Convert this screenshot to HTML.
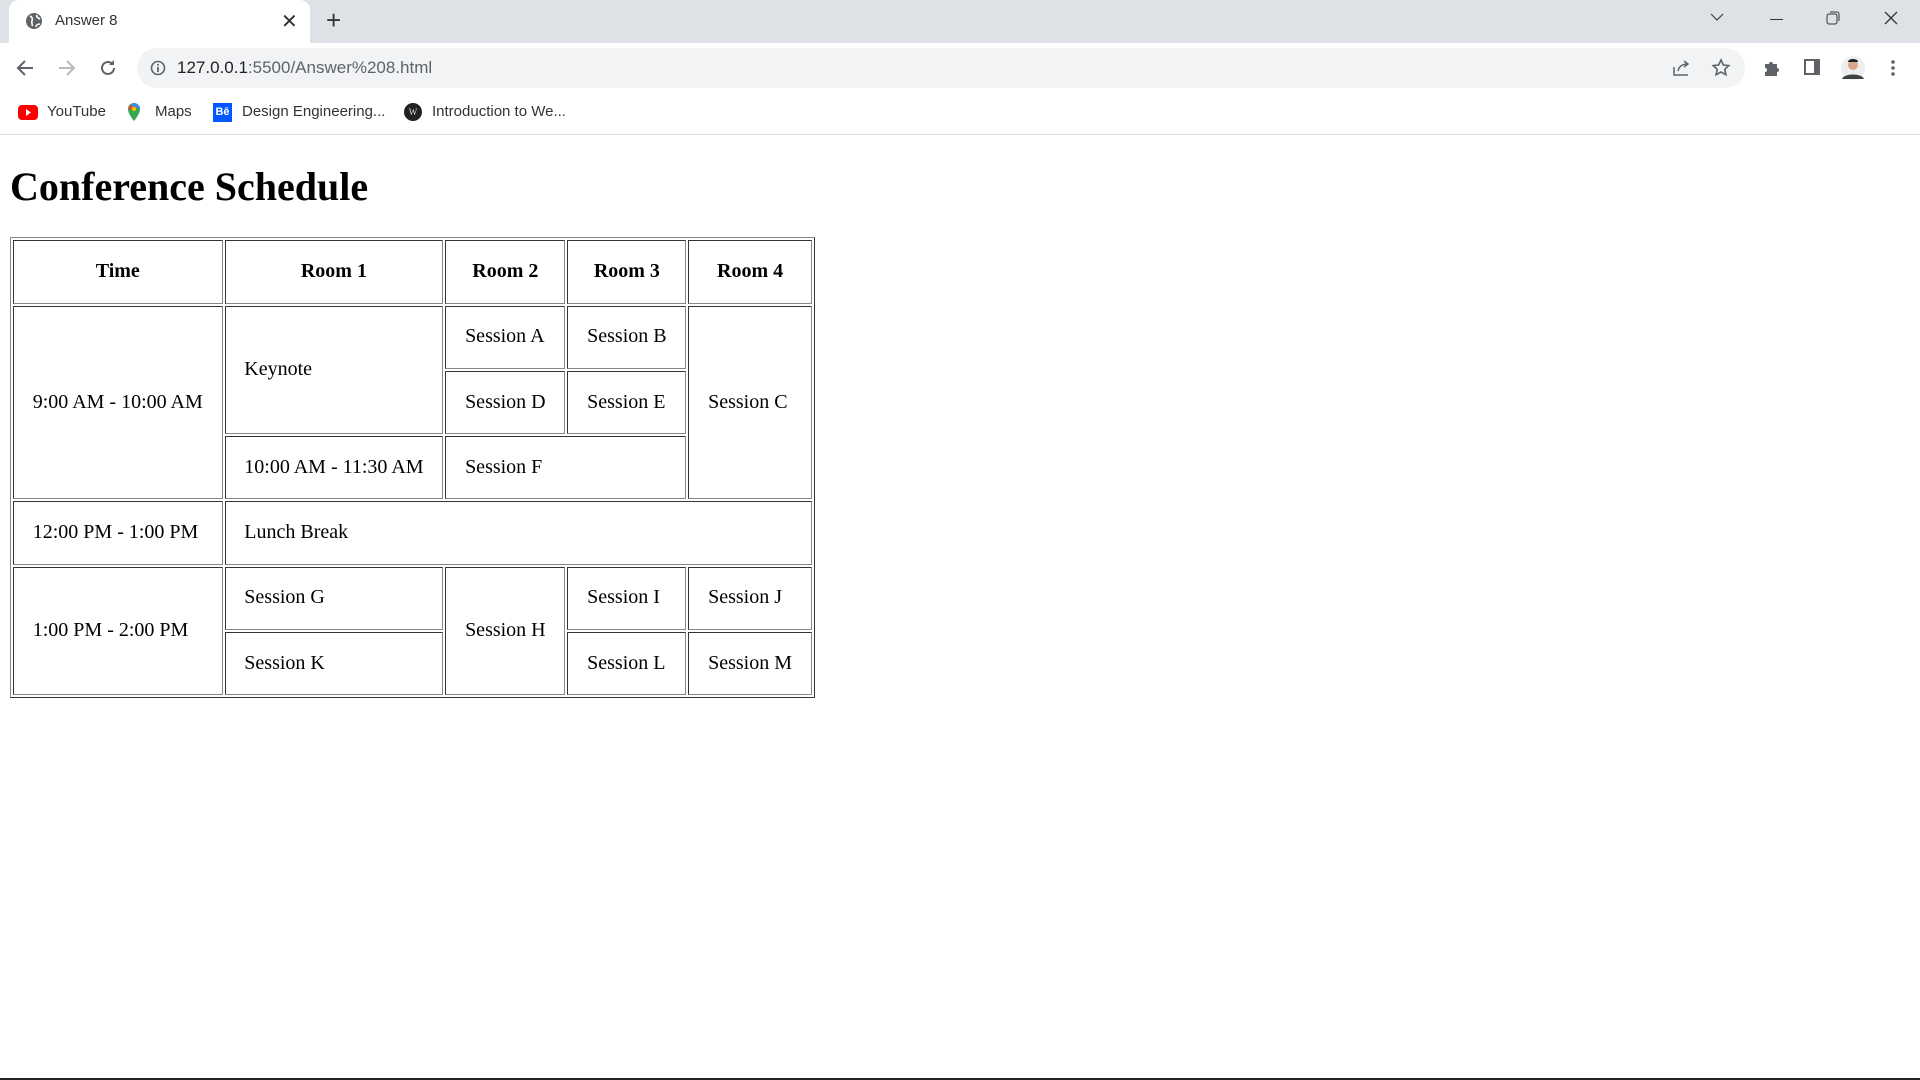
<!DOCTYPE html>
<html><head><meta charset="utf-8"><style>
*{box-sizing:border-box}
body{margin:0;width:1920px;height:1080px;overflow:hidden;background:#fff;font-family:"Liberation Sans",sans-serif;position:relative}
.tabbar{position:absolute;left:0;top:0;width:1920px;height:43px;background:#dee1e6}
.tab{position:absolute;left:9px;top:0;width:301px;height:43px;background:#fff;border-radius:10px 10px 0 0}
.tab .t{position:absolute;left:46px;top:12px;font-size:15px;color:#333}
.tool{position:absolute;left:0;top:43px;width:1920px;height:49px;background:#fff}
.omni{position:absolute;left:137px;top:5px;width:1608px;height:40px;background:#f1f3f4;border-radius:20px}
.omni .u{position:absolute;left:40px;top:10px;font-size:17px;color:#202124}
.bm{position:absolute;left:0;top:92px;width:1920px;height:43px;background:#fff;border-bottom:1px solid #dadce0}
.bm span{position:absolute;top:11px;font-size:15px;color:#333}
.content{position:absolute;left:0;top:110px;width:1536px;zoom:1.25;font-family:"Liberation Serif",serif}
.content div.inner{margin:8px}
h1{font-size:32px;margin:21.44px 0;line-height:37px}
table{border:1px outset #888;border-spacing:2px}
td,th{border:1px inset #888;padding:15px;font-size:16px;text-align:left;line-height:19px;white-space:nowrap}
th{text-align:center}
.bottom{position:absolute;left:0;bottom:0;width:1920px;height:2px;background:#222}
</style></head><body>
<div class="tabbar">
 <div class="tab">
  <svg style="position:absolute;left:16px;top:12px" width="18" height="18" viewBox="0 0 18 18"><circle cx="9" cy="9" r="8" fill="#5f6368"/><path d="M5 4c2 1 3 3 2 5s1 3 0 5M12 3c-1 2 1 3 3 4M11 15c0-2 2-3 4-3" stroke="#fff" stroke-width="1.6" fill="none"/></svg>
  <span class="t">Answer 8</span>
  <span style="position:absolute;left:272px;top:9px;font-size:20px;color:#333">✕</span>
 </div>
 <span style="position:absolute;left:326px;top:5px;font-size:26px;color:#333">+</span>
 <svg style="position:absolute;left:1710px;top:12px" width="14" height="10"><path d="M1 2l6 6 6-6" stroke="#333" fill="none"/></svg>
 <div style="position:absolute;left:1770px;top:19px;width:13px;height:1px;background:#333"></div>
 <svg style="position:absolute;left:1826px;top:11px" width="14" height="14"><rect x="1" y="3" width="10" height="10" rx="2" stroke="#333" fill="none"/><path d="M4 1h7a2 2 0 0 1 2 2v7" stroke="#333" fill="none"/></svg>
 <svg style="position:absolute;left:1884px;top:11px" width="14" height="14"><path d="M1 1l12 12M13 1L1 13" stroke="#333" stroke-width="1.3"/></svg>
</div>
<div class="tool">
 <svg style="position:absolute;left:16px;top:16px" width="18" height="18"><path d="M17 9H3M9 2L2 9l7 7" stroke="#5f6368" stroke-width="2" fill="none"/></svg>
 <svg style="position:absolute;left:58px;top:16px" width="18" height="18"><path d="M1 9h14M9 2l7 7-7 7" stroke="#bbb" stroke-width="2" fill="none"/></svg>
 <svg style="position:absolute;left:98px;top:15px" width="20" height="20"><path d="M16 10a6 6 0 1 1-2-4.5" stroke="#5f6368" stroke-width="2" fill="none"/><path d="M16 2v5h-5z" fill="#5f6368"/></svg>
 <div class="omni">
  <svg style="position:absolute;left:13px;top:12px" width="16" height="16"><circle cx="8" cy="8" r="6.5" stroke="#5f6368" stroke-width="1.6" fill="none"/><path d="M8 7v5M8 4v1.6" stroke="#5f6368" stroke-width="1.8"/></svg>
  <span class="u">127.0.0.1<span style="color:#5f6368">:5500/Answer%208.html</span></span>
  <svg style="position:absolute;left:1535px;top:11px" width="20" height="18"><path d="M2 8v8h14M6 12c1-5 5-7 9-7M12 2l4 3-4 3" stroke="#5f6368" stroke-width="1.5" fill="none"/></svg>
  <svg style="position:absolute;left:1574px;top:10px" width="20" height="20"><path d="M10 2l2.4 5 5.4.6-4 3.7 1.1 5.4L10 14l-4.9 2.7 1.1-5.4-4-3.7L7.6 7z" stroke="#5f6368" stroke-width="1.6" fill="none"/></svg>
 </div>
 <svg style="position:absolute;left:1762px;top:15px" width="20" height="20"><path d="M3 6h4a2 2 0 1 1 4 0h4v4a2 2 0 1 1 0 4v4H3v-4a2 2 0 1 0 0-4z" fill="#5f6368"/></svg>
 <svg style="position:absolute;left:1803px;top:15px" width="18" height="18"><rect x="1" y="1" width="16" height="16" fill="#5f6368"/><rect x="3" y="3" width="8" height="12" fill="#fff"/></svg>
 <svg style="position:absolute;left:1840px;top:12px" width="26" height="26"><circle cx="13" cy="13" r="12" fill="#eee"/><circle cx="13" cy="10" r="5" fill="#d9a88a"/><path d="M8 7c0-4 10-4 10 0z" fill="#222"/><path d="M2 24c2-6 20-6 22 0z" fill="#3a4444"/></svg>
 <svg style="position:absolute;left:1890px;top:16px" width="6" height="18"><circle cx="3" cy="3" r="1.8" fill="#5f6368"/><circle cx="3" cy="9" r="1.8" fill="#5f6368"/><circle cx="3" cy="15" r="1.8" fill="#5f6368"/></svg>
</div>
<div class="bm">
 <svg style="position:absolute;left:18px;top:13px" width="20" height="15"><rect width="20" height="15" rx="4" fill="#f00"/><path d="M8 4l5 3.5-5 3.5z" fill="#fff"/></svg>
 <span style="left:47px">YouTube</span>
 <svg style="position:absolute;left:127px;top:10px" width="14" height="20"><path d="M7 1a6 6 0 0 1 6 6c0 5-6 12-6 12S1 12 1 7a6 6 0 0 1 6-6z" fill="#34a853"/><path d="M7 1a6 6 0 0 1 6 6L4 3z" fill="#4285f4"/><path d="M1 7a6 6 0 0 1 3-4l5 5z" fill="#ea4335"/><circle cx="7" cy="7" r="2.2" fill="#fbbc04"/></svg>
 <span style="left:155px">Maps</span>
 <div style="position:absolute;left:213px;top:11px;width:19px;height:19px;background:#0057ff;color:#fff;font-size:11px;font-weight:bold;text-align:center;line-height:19px">Bē</div>
 <span style="left:242px">Design Engineering...</span>
 <div style="position:absolute;left:404px;top:11px;width:18px;height:18px;border-radius:50%;background:#222;color:#ddd;font-size:9px;text-align:center;line-height:18px;font-family:'Liberation Serif',serif">W</div>
 <span style="left:432px">Introduction to We...</span>
</div>
<div class="content"><div class="inner">
<h1>Conference Schedule</h1>
<table>
<tr><th>Time</th><th>Room 1</th><th>Room 2</th><th>Room 3</th><th>Room 4</th></tr>
<tr><td rowspan="3">9:00 AM - 10:00 AM</td><td rowspan="2">Keynote</td><td>Session A</td><td>Session B</td><td rowspan="3">Session C</td></tr>
<tr><td>Session D</td><td>Session E</td></tr>
<tr><td>10:00 AM - 11:30 AM</td><td colspan="2">Session F</td></tr>
<tr><td>12:00 PM - 1:00 PM</td><td colspan="4">Lunch Break</td></tr>
<tr><td rowspan="2">1:00 PM - 2:00 PM</td><td>Session G</td><td rowspan="2">Session H</td><td>Session I</td><td>Session J</td></tr>
<tr><td>Session K</td><td>Session L</td><td>Session M</td></tr>
</table>
</div></div>
<div class="bottom"></div>
</body></html>
